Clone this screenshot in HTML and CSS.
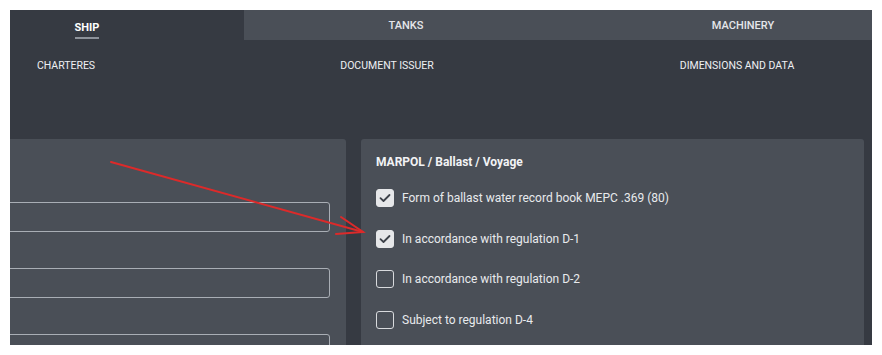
FILE: index.html
```html
<!DOCTYPE html>
<html lang="en">
<head>
    <meta charset="UTF-8">
    <meta name="viewport" content="width=device-width, initial-scale=1.0">
    <title>Ship Particulars</title>
    <link rel="stylesheet" href="styles.css">
</head>
<body>
    <div class="app">
        <!-- main tabs -->
        <div class="tabs">
            <div class="tab tab-ship active"><span>SHIP</span></div>
            <div class="tab tab-tanks"><span>TANKS</span></div>
            <div class="tab tab-machinery"><span>MACHINERY</span></div>
        </div>
        <!-- sub tabs -->
        <div class="subtabs">
            <div class="subtab sub-charterers">CHARTERES</div>
            <div class="subtab sub-issuer">DOCUMENT ISSUER</div>
            <div class="subtab sub-dimensions">DIMENSIONS AND DATA</div>
        </div>
        <div class="content">
            <div class="panel panel-left">
                <input class="field" type="text">
                <input class="field" type="text">
                <input class="field" type="text">
            </div>
            <div class="panel panel-right">
                <div class="panel-title">MARPOL / Ballast / Voyage</div>
                <label class="check-row">
                    <span class="box checked">
                        <svg width="12" height="10" viewBox="0 0 12 10"><path d="M1.5 5.2 L4.5 8 L10.5 2" fill="none" stroke="#3d4149" stroke-width="1.8" stroke-linecap="round" stroke-linejoin="round"/></svg>
                    </span>
                    Form of ballast water record book MEPC .369 (80)
                </label>
                <label class="check-row">
                    <span class="box checked">
                        <svg width="12" height="10" viewBox="0 0 12 10"><path d="M1.5 5.2 L4.5 8 L10.5 2" fill="none" stroke="#3d4149" stroke-width="1.8" stroke-linecap="round" stroke-linejoin="round"/></svg>
                    </span>
                    In accordance with regulation D-1
                </label>
                <label class="check-row">
                    <span class="box"></span>
                    In accordance with regulation D-2
                </label>
                <label class="check-row">
                    <span class="box"></span>
                    Subject to regulation D-4
                </label>
            </div>
        </div>
        <!-- annotation arrow -->
        <svg class="arrow" width="882" height="355" viewBox="0 0 882 355">
            <g stroke="#dc2a2a" stroke-width="2" fill="none" stroke-linecap="round">
                <path d="M101 152 L353 222"/>
                <path d="M331 207 L353 222 L326 224"/>
            </g>
        </svg>
    </div>
</body>
</html>
```

FILE: styles.css
```css
body {
    margin: 0;
    background-color: #fff;
    font-family: Roboto, "Liberation Sans", Arial, sans-serif;
}

.app {
    position: relative;
    margin: 10px;
    height: 335px;
    background-color: #363a42;
    overflow: hidden;
}

.tabs {
    display: flex;
    height: 30px;
}

.tab {
    display: flex;
    align-items: center;
    justify-content: center;
    background-color: #4a4f57;
    color: #e4e6ea;
    font-size: 11px;
    font-weight: 500;
}

.tab-ship {
    width: 234px;
    padding-right: 80px;
    box-sizing: border-box;
}

.tab-tanks {
    width: 324px;
}

.tab-machinery {
    flex-grow: 1;
    padding-left: 46px;
}

.tab.active {
    background-color: #363a42;
    color: #fff;
    font-weight: 700;
}

.tab.active span {
    padding: 6px 0 3px;
    border-bottom: 2px solid #8d929a;
    margin-top: 4px;
}

.subtabs {
    display: flex;
    height: 50px;
    align-items: center;
    color: #eef0f3;
    font-size: 10.5px;
}

.subtab {
    text-align: center;
}

.sub-charterers {
    width: 112px;
}

.sub-issuer {
    width: 530px;
}

.sub-dimensions {
    width: 170px;
}

.content {
    display: flex;
    gap: 15px;
    padding: 49px 8px 0 0;
}

.panel {
    background-color: #4a4f57;
    border-radius: 3px;
    height: 260px;
}

.panel-left {
    width: 336px;
    border-top-left-radius: 0;
    padding: 63px 16px 0 0;
    box-sizing: border-box;
    display: flex;
    flex-direction: column;
    gap: 36px;
}

.field {
    display: block;
    flex-shrink: 0;
    margin-left: -20px;
    width: calc(100% + 20px);
    height: 30px;
    box-sizing: border-box;
    border: 1px solid #a9aeb5;
    border-radius: 3px;
    background: transparent;
}

.panel-right {
    flex-grow: 1;
    padding: 15px 0 0 15px;
}

.panel-title {
    font-size: 12px;
    line-height: 16px;
    font-weight: 700;
    color: #f2f3f5;
    margin-bottom: 8px;
}

.check-row {
    display: flex;
    align-items: center;
    height: 40.6px;
    font-size: 12px;
    color: #e8eaed;
}

.box {
    width: 18px;
    height: 18px;
    box-sizing: border-box;
    border: 1px solid #d8dadd;
    border-radius: 3px;
    margin-right: 8px;
    display: flex;
    align-items: center;
    justify-content: center;
}

.box.checked {
    background-color: #e6e7e9;
    border-color: #e6e7e9;
}

.arrow {
    position: absolute;
    left: 0;
    top: 0;
    pointer-events: none;
}
```
